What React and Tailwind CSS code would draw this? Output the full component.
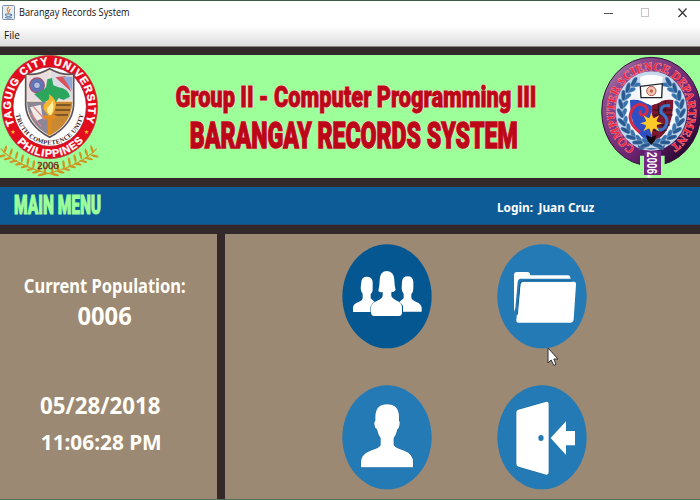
import React from "react";

const leaves = [0, 1, 2, 3, 4, 5, 6, 7];

function UniversitySeal() {
  return (
    <svg className="block h-[123px] w-[110px] shrink-0" viewBox="0 15 330 369" aria-label="Taguig City University">
      <defs>
        <path id="uniTop" d="M45.6 228 A116 126 0 1 1 252.4 228" />
        <path id="uniBottom" d="M45.7 271 A139 150 0 0 0 252.3 271" />
        <path id="uniMotto" d="M46 187 A104 112 0 0 0 252 187" />
      </defs>
      <g fill="none" stroke="#d09a28" strokeWidth="4">
        <path d="M2 296 Q50 350 160 374" />
        <path d="M290 296 Q240 350 130 374" />
      </g>
      <g fill="#cf9320">
        {leaves.map((i) => (
          <g key={i}>
            <ellipse cx={16 + i * 17} cy={298 + i * 9} rx="3.5" ry="12" transform={`rotate(${18 - i * 2} ${16 + i * 17} ${298 + i * 9})`} />
            <ellipse cx={6 + i * 17} cy={318 + i * 8} rx="12" ry="3.5" transform={`rotate(-14 ${6 + i * 17} ${318 + i * 8})`} />
            <ellipse cx={276 - i * 17} cy={298 + i * 9} rx="3.5" ry="12" transform={`rotate(${-18 + i * 2} ${276 - i * 17} ${298 + i * 9})`} />
            <ellipse cx={284 - i * 17} cy={318 + i * 8} rx="12" ry="3.5" transform={`rotate(14 ${284 - i * 17} ${318 + i * 8})`} />
          </g>
        ))}
      </g>
      <ellipse cx="149" cy="171" rx="144" ry="155" fill="#e30c1c" stroke="#a9505a" strokeWidth="2" />
      <ellipse cx="149" cy="170" rx="110" ry="119" fill="#fff" stroke="#8f1420" strokeWidth="2" />
      <path d="M77 72 Q110 78 149 56 Q188 78 221 72 V165 Q218 225 149 262 Q80 225 77 165 Z" fill="#f7e6cf" stroke="#59535c" strokeWidth="5" />
      <path d="M81 78 Q112 82 148 63 V150 H81 Z" fill="#e9dde2" />
      <path d="M152 63 Q188 82 217 78 V150 H152 Z" fill="#d9dce7" />
      <circle cx="111" cy="106" r="22" fill="#5f76b7" stroke="#a25471" strokeWidth="4" />
      <circle cx="111" cy="106" r="10" fill="#b3bde0" stroke="#40508d" strokeWidth="2" />
      <path d="M166 82 L196 78 L214 126 L184 98 Z" fill="#d85259" />
      <path d="M188 80 L217 80 V124 Z" fill="#8fa6d8" />
      <path d="M102 132 Q125 125 138 112 L142 88 L156 84 L160 106 L176 112 Q205 116 210 140 L190 150 L176 144 L166 160 L150 148 L130 158 Z" fill="#2ca55d" />
      <path d="M81 155 H146 V254 Q84 222 81 155Z" fill="#8b8796" />
      <path d="M152 155 H217 Q214 222 152 254Z" fill="#c98932" />
      <path d="M90 172 L122 164 L128 205 L108 214 Z" fill="#f2ece6" />
      <path d="M92 190 L124 230 M100 170 L136 210" stroke="#d9838a" strokeWidth="4" />
      <path d="M166 165 H212 M166 180 H210 M164 195 H204" stroke="#624627" strokeWidth="5" />
      <path d="M145 196 Q120 172 137 157 Q151 150 147 132 Q174 150 166 172 Q163 188 154 196Z" fill="#f8b52f" />
      <path d="M148 194 Q134 176 148 167 Q157 157 156 150 Q166 172 154 194Z" fill="#fff0a0" />
      <path d="M128 196 H170 L163 208 H156 L154 256 H144 L142 208 H135 Z" fill="#e08b1e" />
      <text fontFamily="Liberation Sans, Arial, sans-serif" fontWeight="bold" fontSize="32" fill="#fff" stroke="#fff" strokeWidth="1">
        <textPath href="#uniTop" startOffset="4" textLength="480" lengthAdjust="spacing">TAGUIG CITY UNIVERSITY</textPath>
      </text>
      <text fontFamily="Liberation Sans, Arial, sans-serif" fontWeight="bold" fontSize="32" fill="#fff" stroke="#fff" strokeWidth="1">
        <textPath href="#uniBottom" startOffset="8" textLength="226" lengthAdjust="spacing">PHILIPPINES</textPath>
      </text>
      <text fontFamily="Liberation Serif, Times New Roman, serif" fontWeight="bold" fontSize="19" fill="#3b2022">
        <textPath href="#uniMotto" startOffset="7" textLength="294" lengthAdjust="spacing">TRUTH COMPETENCE UNITY</textPath>
      </text>
      <text x="39" y="251" fontSize="18" fontFamily="DejaVu Sans, sans-serif" textAnchor="middle" fill="#f3bb34">★</text>
      <text x="259" y="251" fontSize="18" fontFamily="DejaVu Sans, sans-serif" textAnchor="middle" fill="#f3bb34">★</text>
      <text x="144" y="356" fontFamily="Liberation Serif, Times New Roman, serif" fontSize="32" textAnchor="middle" textLength="64" fill="#75251b" stroke="#75251b">2006</text>
    </svg>
  );
}

const wreath = [0, 1, 2, 3, 4, 5, 6, 7, 8, 9];
const rays = [0, 45, 90, 135, 180, 225, 270, 315];

function DepartmentSeal() {
  return (
    <svg className="block h-[123px] w-[110px] shrink-0" viewBox="0 30 330 369" aria-label="Computer Science Department">
      <defs>
        <path id="deptArc" d="M138 309 A110 122 0 1 1 230 309" />
        <linearGradient id="deptBg" x1="0" y1="0" x2="1" y2="1">
          <stop offset="0" stopColor="#c9b5c6" />
          <stop offset="0.22" stopColor="#8b4a8e" />
          <stop offset="0.6" stopColor="#6a2470" />
          <stop offset="0.85" stopColor="#2d0a35" />
          <stop offset="1" stopColor="#180320" />
        </linearGradient>
      </defs>
      <ellipse cx="184" cy="200" rx="149" ry="163" fill="url(#deptBg)" stroke="#35113d" strokeWidth="3" />
      <ellipse cx="184" cy="198" rx="107" ry="119" fill="#c3d8ea" />
      <ellipse cx="184" cy="198" rx="80" ry="94" fill="#f4f7fa" />
      <path d="M120 165 Q150 160 184 182 V292 Q120 270 120 165Z" fill="#2e4fc4" />
      <path d="M184 182 Q220 160 250 165 Q250 270 184 292Z" fill="#7b1830" />
      <path d="M190 195 H246 M188 210 H248 M188 240 H240 M188 256 H230 M205 178 V206 M226 168 V200 M218 240 V262" stroke="#2a1020" strokeWidth="3" />
      <path d="M150 262 Q108 230 126 195 Q142 168 166 184 Q180 200 162 210 Q146 212 152 196" fill="none" stroke="#d22a48" strokeWidth="9" />
      <path d="M240 182 Q208 178 214 204 Q240 220 226 246 Q214 260 200 252" fill="none" stroke="#3974c9" strokeWidth="9" />
      {wreath.map((i) => {
        const turn = -58 + i * 15;
        const a = turn * Math.PI / 180;
        const x = 88 * Math.cos(a);
        const y = 198 + 100 * Math.sin(a);
        return (
          <g key={i} stroke="#a9c8e2" strokeWidth="1">
            <ellipse cx={184 + x - 6} cy={y} rx="6.5" ry="16" fill="#3772ad" transform={`rotate(${turn - 28} ${184 + x} ${y})`} />
            <ellipse cx={184 + x + 6} cy={y} rx="6.5" ry="16" fill="#2a5990" transform={`rotate(${turn + 28} ${184 + x} ${y})`} />
            <ellipse cx={184 - x + 6} cy={y} rx="6.5" ry="16" fill="#3772ad" transform={`rotate(${28 - turn} ${184 - x} ${y})`} />
            <ellipse cx={184 - x - 6} cy={y} rx="6.5" ry="16" fill="#2a5990" transform={`rotate(${-turn - 28} ${184 - x} ${y})`} />
          </g>
        );
      })}
      <path d="M150 96 Q184 82 218 96 L213 170 Q184 188 155 168Z" fill="#fff" />
      <path d="M151 124 L217 116 L215 158 L153 158Z" fill="#fff" stroke="#1d2430" strokeWidth="4" />
      <circle cx="184" cy="138" r="14" fill="#efc6b3" stroke="#b8574f" strokeWidth="3" />
      <circle cx="184" cy="138" r="5" fill="#c76042" />
      <g fill="#fbc928">
        {rays.map((r) => <path key={r} d="M174 236 L184 201 L194 236Z" transform={`rotate(${r} 184 235)`} />)}
        <circle cx="184" cy="235" r="18" />
      </g>
      <path d="M168 270 L184 277 L199 270 L194 288 L184 300 L173 288Z" fill="#120b13" />
      <path d="M142 298 Q184 330 226 298 L220 316 Q184 302 148 316Z" fill="#38669b" />
      <text fontFamily="Liberation Serif, Times New Roman, serif" fontWeight="bold" fontSize="36" fill="#f5283c" stroke="#ffb9c2" strokeWidth="1.5" paintOrder="stroke">
        <textPath href="#deptArc" startOffset="3" textLength="618" lengthAdjust="spacingAndGlyphs">COMPUTER SCIENCE DEPARTMENT</textPath>
      </text>
      <path d="M150 332 H224 V372 L216 390 H158 L150 372Z" fill="#9dff9a" />
      <rect x="162" y="318" width="51" height="72" fill="#752681" />
      <text transform="translate(172 321) rotate(90)" fontFamily="Liberation Sans, Arial, sans-serif" fontWeight="bold" fontSize="44" textLength="66" lengthAdjust="spacingAndGlyphs" fill="#fff">2006</text>
      <circle cx="176" cy="394" r="5" fill="#fff" />
    </svg>
  );
}

function MenuButton({ label, dark, children }) {
  return (
    <button aria-label={label} className="block h-[105px] w-[90px]">
      <svg className="block h-[105px] w-[90px]" viewBox="0 0 270 315">
        <ellipse cx="135" cy="157" rx="134" ry="156" fill={dark ? "#045791" : "#247ab5"} />
        {children}
      </svg>
    </button>
  );
}

const impact = "block whitespace-nowrap font-[Roboto,'Liberation_Sans',sans-serif] font-black leading-none";

export default function App() {
  return (
    <div className="flex h-[500px] w-[700px] flex-col overflow-hidden border-t border-b border-t-[#3c5a48] border-b-[#4c7357] bg-[#33282a] font-['Noto_Sans',sans-serif]">
      <header className="flex h-[46px] shrink-0 flex-col border-b border-[#8a8585] bg-gradient-to-b from-white from-55% to-[#dedddd]">
        <div className="flex h-[23px] items-center pl-0.5">
          <svg className="h-[15px] w-[13px]" viewBox="0 0 13 15">
            <rect x="0.5" y="0.5" width="12" height="14" rx="1" fill="#e6edf3" stroke="#7e91a5" />
            <path d="M7 2 Q4 4.5 6 6.5 Q7 7.5 6 8.5 M8.5 4 Q6.5 5.5 7.7 7" fill="none" stroke="#e58a35" strokeWidth="1.2" />
            <path d="M3.5 9 H9 V11 Q6 12 4 11Z M9 9.3 Q11 9.5 9 11 M3 12.5 Q6.5 13.8 10 12.5" fill="none" stroke="#527ca6" />
          </svg>
          <span className="ml-1 w-[112px] origin-left scale-x-[0.92] whitespace-nowrap font-['Open_Sans',sans-serif] text-[10px] text-[#111]">Barangay Records System</span>
          <svg className="ml-auto mr-1 h-[13px] w-[92px]" viewBox="0 0 92 13" fill="none">
            <path d="M0 7.5 H9" stroke="#555" />
            <rect x="37.5" y="2.5" width="7" height="8" stroke="#c9c3c3" />
            <path d="M74.5 2.5 L82.5 11 M82.5 2.5 L74.5 11" stroke="#333" strokeWidth="1.2" />
          </svg>
        </div>
        <span className="pl-1 font-['Open_Sans',sans-serif] text-[10px] leading-[22px] text-[#111]">File</span>
      </header>

      <section className="mt-2 flex h-[123px] shrink-0 items-start justify-between bg-[#9dff9a]">
        <UniversitySeal />
        <div className="flex w-[380px] flex-col items-center pr-[1px] pt-[27px]">
          <h1 className={`${impact} ml-[13px] scale-x-[0.725] text-[30px] text-[#bb0717] [-webkit-text-stroke:0.9px_#bb0717] [text-shadow:1px_0_#f9ddd0,-2px_0_#f9ddd0,0_1px_#f9ddd0,0_-1px_#f9ddd0]`}>Group II - Computer Programming III</h1>
          <h2 className={`${impact} mt-[5px] ml-[9px] scale-x-[0.624] text-[37px] text-[#bb0717] [-webkit-text-stroke:1.4px_#bb0717] [text-shadow:1px_0_#f9ddd0,-2px_0_#f9ddd0,0_1px_#f9ddd0,0_-1px_#f9ddd0]`}>BARANGAY RECORDS SYSTEM</h2>
        </div>
        <DepartmentSeal />
      </section>

      <section className="mt-[9px] flex h-[38px] shrink-0 items-center border-b border-[#224d72] bg-[#0d5c98] text-white">
        <h3 className={`${impact} ml-[14px] w-[483px] origin-left scale-x-[0.62] text-[25px] text-[#9dff9a] [-webkit-text-stroke:1px_#9dff9a]`}>MAIN MENU</h3>
        <p className="mt-1 origin-left scale-x-[0.91] whitespace-pre text-[13px] font-bold"><span>Login:</span><span className="ml-1.5">Juan Cruz</span></p>
      </section>

      <main className="mt-[9px] flex min-h-0 flex-1 gap-2 text-[#fffef9]">
        <aside className="flex w-[217px] shrink-0 flex-col items-center bg-[#9c8973] pr-[8px] pt-[38px] font-bold">
          <p className="scale-x-[0.845] whitespace-nowrap text-[19.5px] leading-[28px]">Current Population:</p>
          <p className="scale-x-[0.95] text-[25px] leading-[30px]">0006</p>
          <p className="mt-[58px] scale-x-[0.97] whitespace-nowrap pr-[8px] text-[23px] leading-[34px]">05/28/2018</p>
          <p className="mt-[2px] scale-x-[0.945] whitespace-nowrap pr-[8px] text-[22px] leading-[34px]">11:06:28 PM</p>
        </aside>
        <section className="relative flex-1 bg-[#9c8973]">
          <div className="grid w-fit grid-cols-[90px_90px] gap-x-[65px] gap-y-9 pl-[117px] pt-[10px]">
            <MenuButton label="Residents" dark>
              <g fill="#fff" transform="translate(-36 -27)">
                <path d="M94 140 Q96 125 110 125 Q126 125 128 140 V165 Q128 172 122 178 V190 L135 202 L124 214 V231 H69 V217 Q70 207 86 201 Q98 196 98 189 V177 Q92 170 92 160Z" />
                <path d="M216 140 Q218 124 233 124 Q248 124 250 140 V160 Q250 171 244 177 V188 Q246 195 259 201 Q274 207 275 218 V230 H219 V212 L208 201 L221 190 V177 Q215 170 215 160Z" />
                <path d="M145 168 Q149 151 149 135 Q150 108 171 108 Q192 109 193 135 Q193 151 197 165 Q192 172 184 172 V183 Q187 191 202 198 Q215 204 216 215 V232 Q216 243 207 243 H132 Q123 243 123 232 V215 Q125 204 142 197 Q158 190 158 182 V171 Q150 173 145 168Z" stroke="#045791" strokeWidth="3" paintOrder="stroke" />
              </g>
            </MenuButton>
            <MenuButton label="Records">
              <g fill="#fff" transform="translate(-36 -27)">
                <path d="M87 230 V120 Q87 111 96 111 H126 Q135 111 136 121 H249 Q255 121 257 131 H107 Q99 131 98 142 L91 220Z" />
                <path d="M106 149 Q106 140 116 140 H266 Q274 140 273 149 L266 253 Q265 263 257 263 H101 Q93 263 94 254Z" />
                <path d="M97 239 L105 148 Q106 138 116 138 H260" fill="none" stroke="#115b90" strokeWidth="3" />
              </g>
            </MenuButton>
            <MenuButton label="Profile">
              <path transform="translate(-36 -27)" d="M136 122 Q137 85 171 85 Q206 85 207 122 V135 Q211 137 208 149 Q207 157 202 160 Q199 177 191 187 V207 Q196 216 223 224 Q250 234 249 259 V274 H93 V259 Q93 235 121 224 Q149 216 152 207 V187 Q144 176 141 160 Q135 158 134 149 Q131 137 136 135Z" fill="#fff" stroke="#145e96" strokeWidth="2" paintOrder="stroke" />
            </MenuButton>
            <MenuButton label="Log out">
              <g transform="translate(-36 -27)" fill="#fff">
                <path d="M94 109 Q94 103 100 101 L184 77 Q191 76 191 84 V289 Q191 297 184 296 L101 272 Q94 270 94 263Z" stroke="#145e96" strokeWidth="2" paintOrder="stroke" />
                <ellipse cx="168" cy="186" rx="8" ry="9" fill="#247ab5" />
                <path d="M197 186 L243 136 V165 H270 V208 H243 V237Z" />
              </g>
            </MenuButton>
          </div>
          <svg className="absolute left-[322px] top-[113px] h-[20px] w-3" viewBox="0 0 12 20">
            <path d="M1 1 V16 L4.2 13 L6.8 18.5 L9 17.3 L6.8 12 H11Z" fill="#fff" stroke="#332f32" />
          </svg>
        </section>
      </main>
    </div>
  );
}
